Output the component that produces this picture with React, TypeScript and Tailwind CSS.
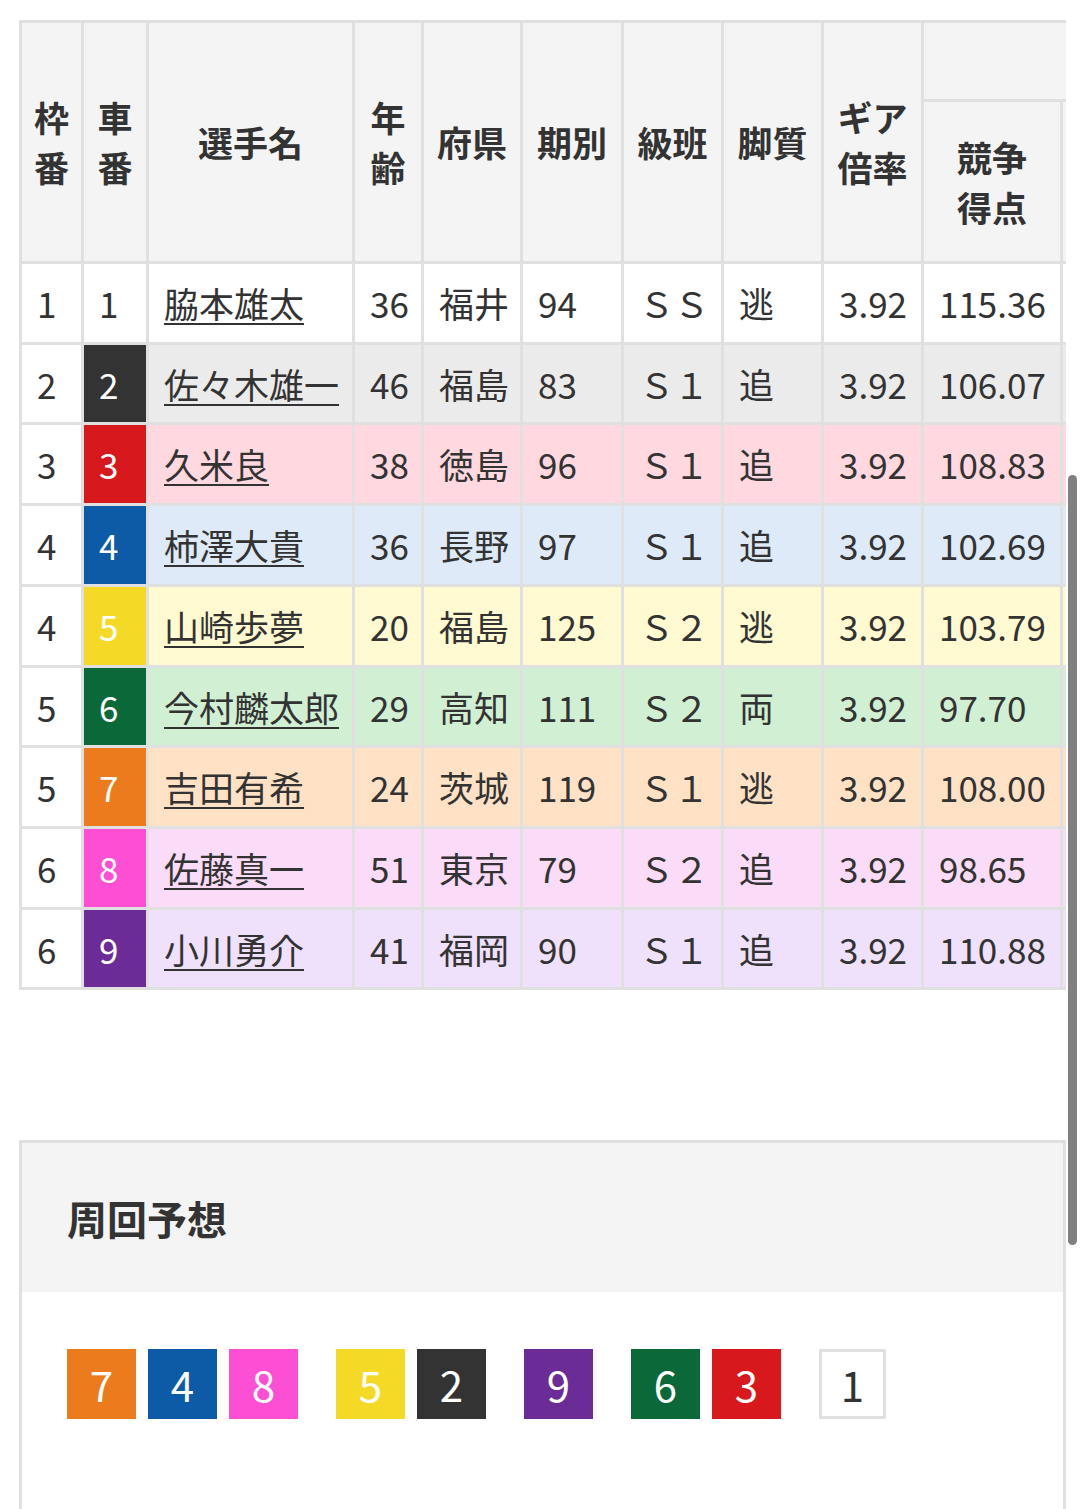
import React from 'react';

type Racer = {
  waku: number;
  car: number;
  name: string;
  age: number;
  pref: string;
  term: number;
  rank: string;
  style: string;
  gear: string;
  score: string;
};

const racers: Racer[] = [
  { waku: 1, car: 1, name: '脇本雄太', age: 36, pref: '福井', term: 94, rank: 'ＳＳ', style: '逃', gear: '3.92', score: '115.36' },
  { waku: 2, car: 2, name: '佐々木雄一', age: 46, pref: '福島', term: 83, rank: 'Ｓ１', style: '追', gear: '3.92', score: '106.07' },
  { waku: 3, car: 3, name: '久米良', age: 38, pref: '徳島', term: 96, rank: 'Ｓ１', style: '追', gear: '3.92', score: '108.83' },
  { waku: 4, car: 4, name: '柿澤大貴', age: 36, pref: '長野', term: 97, rank: 'Ｓ１', style: '追', gear: '3.92', score: '102.69' },
  { waku: 4, car: 5, name: '山崎歩夢', age: 20, pref: '福島', term: 125, rank: 'Ｓ２', style: '逃', gear: '3.92', score: '103.79' },
  { waku: 5, car: 6, name: '今村麟太郎', age: 29, pref: '高知', term: 111, rank: 'Ｓ２', style: '両', gear: '3.92', score: '97.70' },
  { waku: 5, car: 7, name: '吉田有希', age: 24, pref: '茨城', term: 119, rank: 'Ｓ１', style: '逃', gear: '3.92', score: '108.00' },
  { waku: 6, car: 8, name: '佐藤真一', age: 51, pref: '東京', term: 79, rank: 'Ｓ２', style: '追', gear: '3.92', score: '98.65' },
  { waku: 6, car: 9, name: '小川勇介', age: 41, pref: '福岡', term: 90, rank: 'Ｓ１', style: '追', gear: '3.92', score: '110.88' },
];

// car number -> badge colour and row tint
const carColors: Record<number, { badge: string; row: string }> = {
  1: { badge: 'bg-white text-[#333]', row: 'bg-white' },
  2: { badge: 'bg-[#333333] text-white', row: 'bg-[#ebebeb]' },
  3: { badge: 'bg-[#d7181c] text-white', row: 'bg-[#ffd8e0]' },
  4: { badge: 'bg-[#0d5aa6] text-white', row: 'bg-[#deeaf7]' },
  5: { badge: 'bg-[#f4d926] text-white', row: 'bg-[#fffad2]' },
  6: { badge: 'bg-[#0b6838] text-white', row: 'bg-[#d0efd3]' },
  7: { badge: 'bg-[#ec7b1e] text-white', row: 'bg-[#ffe2c6]' },
  8: { badge: 'bg-[#fc4fd4] text-white', row: 'bg-[#fbdcf8]' },
  9: { badge: 'bg-[#6b2c97] text-white', row: 'bg-[#efe0fb]' },
};

const lineup: number[][] = [[7, 4, 8], [5, 2], [9], [6, 3], [1]];

const th = 'border-r-[3px] border-b-[3px] border-[#e0e0e0] bg-[#f4f4f4] font-bold text-center align-middle leading-[50px]';
const td = 'border-r-[3px] border-b-[3px] border-[#e0e0e0] pl-[15px] pr-[6px] py-[12px] text-left align-middle leading-[53.7px] whitespace-nowrap';

const RacerTable: React.FC = () => (
  <div className="overflow-hidden">
    <table className="table-fixed w-[1190px] border-separate border-spacing-0 border-l-[3px] border-t-[3px] border-[#e0e0e0] text-[35px] text-[#333]">
      <colgroup>
        <col className="w-[62px]" />
        <col className="w-[65px]" />
        <col className="w-[206px]" />
        <col className="w-[69px]" />
        <col className="w-[99px]" />
        <col className="w-[101px]" />
        <col className="w-[100px]" />
        <col className="w-[100px]" />
        <col className="w-[100px]" />
        <col className="w-[139px]" />
        <col className="w-[146px]" />
      </colgroup>
      <thead>
        <tr className="h-[79px]">
          <th rowSpan={2} className={th}>枠<br />番</th>
          <th rowSpan={2} className={th}>車<br />番</th>
          <th rowSpan={2} className={th}>選手名</th>
          <th rowSpan={2} className={th}>年<br />齢</th>
          <th rowSpan={2} className={th}>府県</th>
          <th rowSpan={2} className={th}>期別</th>
          <th rowSpan={2} className={th}>級班</th>
          <th rowSpan={2} className={th}>脚質</th>
          <th rowSpan={2} className={th}>ギア<br />倍率</th>
          <th colSpan={2} className={th}></th>
        </tr>
        <tr className="h-[162px]">
          <th className={th}>競争<br />得点</th>
          <th className={th}></th>
        </tr>
      </thead>
      <tbody>
        {racers.map((r) => {
          const c = carColors[r.car];
          return (
            <tr key={r.car} className={c.row}>
              <td className={`${td} bg-white`}>{r.waku}</td>
              <td className={`${td} ${c.badge}`}>{r.car}</td>
              <td className={td}>
                <span className="underline decoration-[2px] underline-offset-[5px]">{r.name}</span>
              </td>
              <td className={td}>{r.age}</td>
              <td className={td}>{r.pref}</td>
              <td className={td}>{r.term}</td>
              <td className={td}>{r.rank}</td>
              <td className={td}>{r.style}</td>
              <td className={td}>{r.gear}</td>
              <td className={td}>{r.score}</td>
              <td className={td}></td>
            </tr>
          );
        })}
      </tbody>
    </table>
  </div>
);

const LapForecast: React.FC = () => (
  <section className="mt-[150px] border-[3px] border-[#e0e0e0]">
    <div className="bg-[#f4f4f4] h-[149px] flex items-center pl-[45px]">
      <h2 className="text-[40px] font-bold text-[#333]">周回予想</h2>
    </div>
    <div className="bg-white pt-[57px] pb-[120px] pl-[45px] flex gap-[38px]">
      {lineup.map((group, i) => (
        <div key={i} className="flex gap-[12px]">
          {group.map((n) => (
            <div
              key={n}
              className={`h-[70px] flex items-center justify-center text-[42px] leading-none ${
                n === 1 ? 'w-[67px] bg-white text-[#333] border-[3px] border-[#e0e0e0]' : `w-[69px] ${carColors[n].badge}`
              }`}
            >
              {n}
            </div>
          ))}
        </div>
      ))}
    </div>
  </section>
);

export default function App() {
  return (
    <div className="relative bg-white min-h-[1509px] px-[19px] pt-[20px] font-['Noto_Sans_CJK_JP','Noto_Sans',sans-serif]">
      <RacerTable />
      <LapForecast />
      {/* scroll indicator */}
      <div className="absolute right-[8px] top-[475px] w-[9px] h-[770px] rounded-full bg-[#808080]" />
    </div>
  );
}
